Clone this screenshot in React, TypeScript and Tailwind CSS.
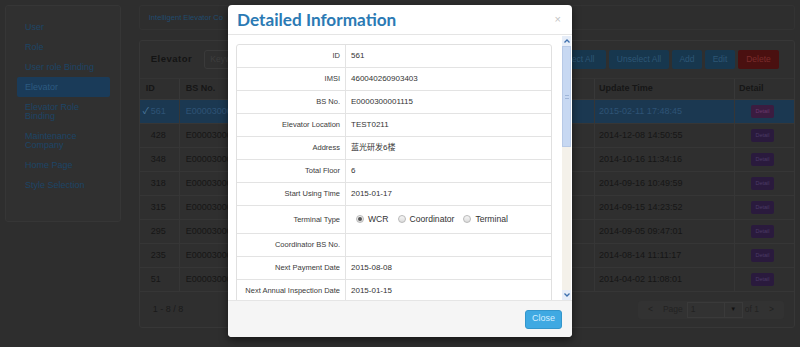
import React from 'react';

const NAV = [
  { name: 'User' },
  { name: 'Role' },
  { name: 'User role Binding' },
  { name: 'Elevator', active: true },
  { name: 'Elevator Role Binding', tall: true },
  { name: 'Maintenance Company', tall: true },
  { name: 'Home Page' },
  { name: 'Style Selection' },
];

const ROWS = [
  { id: '561', bs: 'E0000300001115', time: '2015-02-11 17:48:45', selected: true },
  { id: '428', bs: 'E0000300001098', time: '2014-12-08 14:50:55' },
  { id: '348', bs: 'E0000300000932', time: '2014-10-16 11:34:16' },
  { id: '318', bs: 'E0000300000871', time: '2014-09-16 10:49:59' },
  { id: '315', bs: 'E0000300000868', time: '2014-09-15 14:23:52' },
  { id: '295', bs: 'E0000300000845', time: '2014-09-05 09:47:01' },
  { id: '235', bs: 'E0000300000712', time: '2014-08-14 11:11:17' },
  { id: '51', bs: 'E0000300000051', time: '2014-04-02 11:08:01' },
];

const DETAILS: { label: string; value?: string; radio?: boolean }[] = [
  { label: 'ID', value: '561' },
  { label: 'IMSI', value: '460040260903403' },
  { label: 'BS No.', value: 'E0000300001115' },
  { label: 'Elevator Location', value: 'TEST0211' },
  { label: 'Address', value: '蓝光研发6楼' },
  { label: 'Total Floor', value: '6' },
  { label: 'Start Using Time', value: '2015-01-17' },
  { label: 'Terminal Type', radio: true },
  { label: 'Coordinator BS No.', value: '' },
  { label: 'Next Payment Date', value: '2015-08-08' },
  { label: 'Next Annual Inspection Date', value: '2015-01-15' },
];

function Radio({ checked, label }: { checked?: boolean; label: string }) {
  return (
    <label className="flex items-center gap-[4px]">
      <span className="w-[8px] h-[8px] rounded-full border border-[#b9b9b9] bg-gradient-to-b from-[#f6f6f6] to-[#dcdcdc] flex items-center justify-center">
        {checked && <span className="w-[4px] h-[4px] rounded-full bg-[#555]" />}
      </span>
      <span className="text-[8.6px] text-[#333]">{label}</span>
    </label>
  );
}

export default function App() {
  return (
    <div className="relative w-[800px] h-[347px] overflow-hidden bg-[#2e2e2e] font-['Liberation_Sans','Noto_Sans_CJK_SC',sans-serif]">
      {/* Page behind the backdrop */}
      <div className="flex gap-[18px] p-[5px]">
        {/* Sidebar */}
        <div className="w-[116px] h-[217px] bg-[#303030] border border-[#363636] rounded-[3px] pt-[11px] pl-[11px] pr-[10px] flex flex-col">
          {NAV.map(item => (
            <div
              key={item.name}
              className={`px-[8px] text-[9px] leading-[9px] flex items-center rounded-[2px] ${item.tall ? 'h-[29px]' : 'h-[20px]'} ${
                item.active ? 'bg-[#1a3b59] text-[#2c5a80]' : 'text-[#1d4566]'
              }`}
            >
              {item.name}
            </div>
          ))}
        </div>

        {/* Main column */}
        <div className="w-[658px] flex flex-col">
          <div className="h-[25px] border border-[#333] rounded-[3px] flex items-center pl-[9px] text-[7.6px] text-[#214c6e]">
            Intelligent Elevator Co
          </div>

          <div className="mt-[10px] h-[288px] border border-[#373737] rounded-[3px] bg-[#2f2f2f] flex flex-col">
            {/* Toolbar */}
            <div className="h-[38px] flex items-center pl-[11px] pr-[15px] border-b border-[#343434]">
              <span className="text-[9.5px] font-bold tracking-[0.5px] text-[#141414]">Elevator</span>
              <div className="ml-[12px] w-[120px] h-[19px] border border-[#3a3a3a] rounded-[3px] flex items-center px-[5px] text-[8.5px] text-[#3e3e3e]">
                Keyword
              </div>
              <div className="ml-auto flex gap-[3px] text-[8.5px]">
                <span className="w-[58px] h-[19px] rounded-[2px] bg-[#17374e] text-[#2d5675] flex items-center justify-center">Select All</span>
                <span className="w-[60px] h-[19px] rounded-[2px] bg-[#17374e] text-[#2d5675] flex items-center justify-center">Unselect All</span>
                <span className="w-[30px] h-[19px] rounded-[2px] bg-[#17374e] text-[#2d5675] flex items-center justify-center">Add</span>
                <span className="w-[30px] h-[19px] rounded-[2px] bg-[#17374e] text-[#2d5675] flex items-center justify-center">Edit</span>
                <span className="w-[41px] h-[19px] rounded-[2px] bg-[#4a1010] text-[#7a2c2c] flex items-center justify-center">Delete</span>
              </div>
            </div>

            {/* Table */}
            <div className="grid grid-cols-[39px_1fr_140px_60px] text-[9px] text-[#161616]">
              <div className="h-[21px] flex items-center pl-[6px] font-bold border-b border-[#383838]">ID</div>
              <div className="h-[21px] flex items-center pl-[6px] font-bold border-b border-l border-[#383838]">BS No.</div>
              <div className="h-[21px] flex items-center pl-[4px] font-bold border-b border-l border-[#383838]">Update Time</div>
              <div className="h-[21px] flex items-center pl-[4px] font-bold border-b border-l border-[#383838]">Detail</div>
              {ROWS.map(r => (
                <React.Fragment key={r.id}>
                  <div className={`h-[24px] flex items-center pl-[3px] border-b border-[#363636] ${r.selected ? 'bg-[#1b3851] text-[#2e5375]' : ''}`}>
                    <span className={`w-[8px] ${r.selected ? 'text-[#4b7aa0]' : ''}`}>{r.selected ? '✓' : ''}</span>
                    {r.id}
                  </div>
                  <div className={`h-[24px] flex items-center pl-[6px] border-b border-l border-[#363636] ${r.selected ? 'bg-[#1b3851] text-[#2e5375]' : ''}`}>{r.bs}</div>
                  <div className={`h-[24px] flex items-center pl-[4px] border-b border-l border-[#363636] ${r.selected ? 'bg-[#1b3851] text-[#2e5375]' : ''}`}>{r.time}</div>
                  <div className={`h-[24px] flex items-center pl-[16px] border-b border-l border-[#363636] ${r.selected ? 'bg-[#1b3851]' : ''}`}>
                    <span className={`w-[23px] h-[13px] rounded-[2px] text-[5.5px] flex items-center justify-center ${r.selected ? 'bg-[#3b1c40] text-[#6a3a6e]' : 'bg-[#2a1a3d] text-[#4c3a66]'}`}>Detail</span>
                  </div>
                </React.Fragment>
              ))}
            </div>

            {/* Table footer */}
            <div className="flex-1 flex items-center pl-[13px] pr-[10px] text-[9px] text-[#1a1a1a]">
              <span>1 - 8 / 8</span>
              <div className="ml-auto h-[18px] flex items-center bg-[#323232] rounded-[3px] text-[8.5px] text-[#222]">
                <span className="w-[25px] text-center text-[#202020]">&lt;</span>
                <span>Page</span>
                <span className="ml-[4px] w-[38px] h-[16px] border border-[#3a3a3a] flex items-center pl-[3px]">1</span>
                <span className="w-[18px] h-[16px] border border-[#3a3a3a] border-l-0 flex items-center justify-center text-[6px] text-[#111]">▼</span>
                <span className="ml-[2px]">of 1</span>
                <span className="w-[25px] text-center text-[#202020]">&gt;</span>
              </div>
            </div>
          </div>
        </div>
      </div>

      {/* Modal */}
      <div className="absolute left-[228px] top-[5px] w-[344px] h-[332px] bg-white rounded-[4px] shadow-[0_3px_9px_rgba(0,0,0,0.5)] flex flex-col overflow-hidden">
        <div className="h-[30px] border-b border-[#e5e5e5] flex items-center pl-[9px] pr-[11px]">
          <h3 className="font-['Lato',sans-serif] text-[17.2px] font-bold text-[#2b7ab4]">Detailed Information</h3>
          <span className="ml-auto text-[11px] text-[#c4c4c4]">×</span>
        </div>

        <div className="flex-1 flex min-h-0">
          <div className="flex-1 overflow-hidden pt-[9px] pl-[8px] pr-[10px]">
            <div className="border border-[#e0e0e0] rounded-[3px] text-[8px] text-[#333]">
              {DETAILS.map(d => (
                <div key={d.label} className={`flex border-b border-[#e3e3e3] ${d.radio ? 'h-[28px]' : 'h-[23px]'}`}>
                  <div className="w-[109px] shrink-0 border-r border-[#e3e3e3] flex items-center justify-end pr-[5px] text-[7.5px] text-[#3a3a3a]">{d.label}</div>
                  <div className="flex-1 flex items-center pl-[5px]">
                    {d.radio ? (
                      <div className="flex items-center gap-[9px] pl-[5px]">
                        <Radio checked label="WCR" />
                        <Radio label="Coordinator" />
                        <Radio label="Terminal" />
                      </div>
                    ) : (
                      d.value
                    )}
                  </div>
                </div>
              ))}
            </div>
          </div>

          {/* Scrollbar */}
          <div className="w-[9px] mr-[1px] mt-[1px] flex flex-col bg-[#f4f1ea]">
            <div className="h-[10px] bg-[#e6edf8] flex items-center justify-center">
              <svg width="6" height="4" viewBox="0 0 6 4"><path d="M0.5 3.5 L3 1 L5.5 3.5" fill="none" stroke="#3d6fae" strokeWidth="1.3" /></svg>
            </div>
            <div className="h-[101px] bg-[#c7d8f2] border border-[#b7c9e6] flex items-center justify-center">
              <div className="w-[4px] h-[4px] border-y border-[#9fb5d8]" />
            </div>
            <div className="flex-1" />
            <div className="h-[10px] bg-[#e6edf8] flex items-center justify-center">
              <svg width="6" height="4" viewBox="0 0 6 4"><path d="M0.5 0.5 L3 3 L5.5 0.5" fill="none" stroke="#3d6fae" strokeWidth="1.3" /></svg>
            </div>
          </div>
        </div>

        <div className="h-[37px] bg-[#f5f5f5] border-t border-[#e5e5e5] flex items-center justify-end pr-[10px]">
          <button className="w-[37px] h-[19px] rounded-[3px] bg-[#3fa9e2] border border-[#3396cc] text-[9px] text-[#d4eeff]">Close</button>
        </div>
      </div>
    </div>
  );
}
